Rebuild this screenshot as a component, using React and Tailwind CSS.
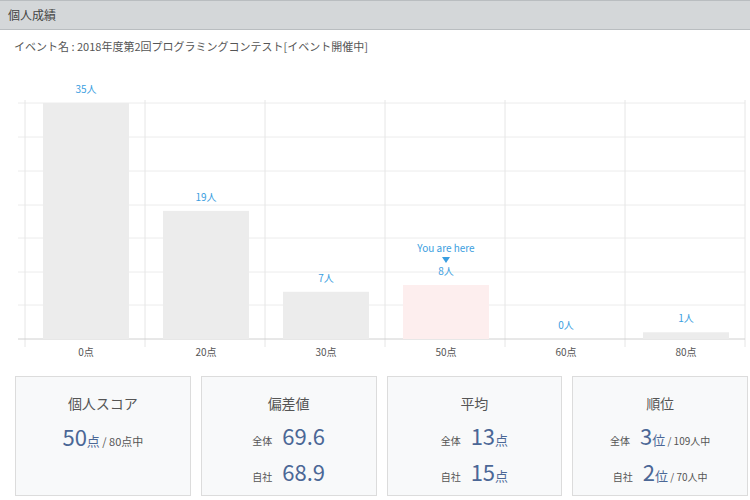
export default function App() {
  const data = [
    ["0点", 35], ["20点", 19], ["30点", 7], ["50点", 8], ["60点", 0], ["80点", 1],
  ];
  const base = 339, k = 236 / 35;
  const f = { fontFamily: "'Noto Sans CJK JP', 'Noto Sans', sans-serif" };
  return (
    <div className="w-[750px] h-[500px] bg-white overflow-hidden" style={f}>
      <div className="h-[30px] bg-[#d4d7d9] border-y border-[#b9bdc0] flex items-center px-2 text-[12px] text-[#444]">個人成績</div>
      <div className="px-[14px] pt-[8px] text-[11px] text-[#555] h-[24px]">イベント名 : 2018年度第2回プログラミングコンテスト[イベント開催中]</div>
      <svg width="750" height="322" viewBox="0 54 750 322" className="block" style={f}>
        {[103, 137, 171, 205, 238, 272, 305].map((y) => (
          <line key={y} x1="18" x2="745" y1={y} y2={y} stroke="#ececec" />
        ))}
        {[0, 1, 2, 3, 4, 5, 6].map((i) => (
          <line key={i} x1={25 + i * 120} x2={25 + i * 120} y1="100" y2="347" stroke="#e6e6e6" />
        ))}
        <line x1="18" x2="745" y1={base} y2={base} stroke="#d0d0d0" />
        {data.map(([l, v], i) => {
          const h = v * k, x = 43 + i * 120, top = base - h;
          return (
            <g key={l}>
              <rect x={x} y={top} width="86" height={h} fill={i === 3 ? "#fdeeee" : "#ececec"} />
              <text x={x + 43} y={top - 10} textAnchor="middle" fontSize="10" fill="#3a9ee0">{v}人</text>
              <text x={x + 43} y="356" textAnchor="middle" fontSize="10" fill="#555">{l}</text>
              {i === 3 && (
                <>
                  <text x={x + 43} y="252" textAnchor="middle" fontSize="10" fill="#3a9ee0">You are here</text>
                  <polygon points={`${x + 39},257 ${x + 47},257 ${x + 43},263`} fill="#3a9ee0" />
                </>
              )}
            </g>
          );
        })}
      </svg>
      <div className="flex gap-[10px] pl-[15px] pr-[2px]">
        <Card title="個人スコア">
          <div className="text-[#4b6796]"><span className="text-[22px]">50</span><span className="text-[13px]">点</span><span className="text-[11px] text-[#555]"> / 80点中</span></div>
        </Card>
        <Card title="偏差値">
          <Row label="全体"><span className="text-[22px]">69.6</span></Row>
          <Row label="自社"><span className="text-[22px]">68.9</span></Row>
        </Card>
        <Card title="平均">
          <Row label="全体"><span className="text-[22px]">13</span><span className="text-[13px]">点</span></Row>
          <Row label="自社"><span className="text-[22px]">15</span><span className="text-[13px]">点</span></Row>
        </Card>
        <Card title="順位">
          <Row label="全体"><span className="text-[22px]">3</span><span className="text-[13px]">位</span><span className="text-[10px] text-[#555]"> / 109人中</span></Row>
          <Row label="自社"><span className="text-[22px]">2</span><span className="text-[13px]">位</span><span className="text-[10px] text-[#555]"> / 70人中</span></Row>
        </Card>
      </div>
    </div>
  );
}

function Card({ title, children }) {
  return (
    <div className="flex-1 h-[120px] border border-[#dcdcdc] bg-[#f8f9fa] flex flex-col items-center pt-[16px]">
      <div className="text-[14px] text-[#555] mb-[6px]">{title}</div>
      {children}
    </div>
  );
}

function Row({ label, children }) {
  return (
    <div className="flex items-baseline gap-[10px] text-[#4b6796] leading-[30px]">
      <span className="text-[10px] text-[#555]">{label}</span>
      <span>{children}</span>
    </div>
  );
}
